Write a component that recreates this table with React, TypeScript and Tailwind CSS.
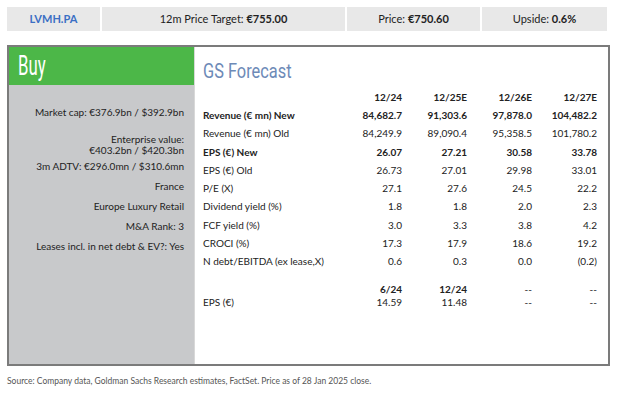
import React from "react";

const rows = [
  { label: "Revenue (€ mn) New", vals: ["84,682.7", "91,303.6", "97,878.0", "104,482.2"], bold: true },
  { label: "Revenue (€ mn) Old", vals: ["84,249.9", "89,090.4", "95,358.5", "101,780.2"] },
  { label: "EPS (€) New", vals: ["26.07", "27.21", "30.58", "33.78"], bold: true },
  { label: "EPS (€) Old", vals: ["26.73", "27.01", "29.98", "33.01"] },
  { label: "P/E (X)", vals: ["27.1", "27.6", "24.5", "22.2"] },
  { label: "Dividend yield (%)", vals: ["1.8", "1.8", "2.0", "2.3"] },
  { label: "FCF yield (%)", vals: ["3.0", "3.3", "3.8", "4.2"] },
  { label: "CROCI (%)", vals: ["17.3", "17.9", "18.6", "19.2"] },
  { label: "N debt/EBITDA (ex lease,X)", vals: ["0.6", "0.3", "0.0", "(0.2)"] },
];

const facts = [
  "Market cap: €376.9bn / $392.9bn",
  "3m ADTV: €296.0mn / $310.6mn",
  "France",
  "Europe Luxury Retail",
  "M&A Rank: 3",
  "Leases incl. in net debt & EV?: Yes",
];

const App = () => {
  return (
    <div className="w-[620px] h-[396px] bg-white text-[#222] font-['Lato','Open_Sans',sans-serif] overflow-hidden">
      {/* top bar */}
      <div className="flex gap-[2px] ml-[7px] mt-[7px] w-[600px] h-[24px] text-[11px]">
        <div className="w-[93px] bg-[#e8e8e8] flex items-center justify-center font-bold text-[#3b6fc4]">
          LVMH.PA
        </div>
        <div className="w-[243px] bg-[#e8e8e8] flex items-center justify-center">
          12m Price Target:&nbsp;<b>€755.00</b>
        </div>
        <div className="w-[133px] bg-[#e8e8e8] flex items-center justify-center">
          Price:&nbsp;<b>€750.60</b>
        </div>
        <div className="w-[125px] bg-[#e8e8e8] flex items-center justify-center">
          Upside:&nbsp;<b>0.6%</b>
        </div>
      </div>

      {/* main box */}
      <div className="ml-[7px] mt-[14px] w-[603px] h-[321px] border-2 border-[#7b7b7b] flex">
        <div className="w-[185px] flex flex-col">
          <div className="h-[38px] bg-[#4cb748] flex items-center pl-[9px] text-white">
            <span className="inline-block origin-left scale-x-[0.62] text-[27px] leading-[30px] font-['Roboto',sans-serif]">
              Buy
            </span>
          </div>
          <div className="flex-1 bg-[#c8c9cb] flex flex-col items-end gap-[8px] pt-[21px] pr-[10px] text-[10px] leading-[12px] text-right">
            <div>{facts[0]}</div>
            <div className="mt-[8px] mb-[-4px] leading-[11px]">
              Enterprise value:
              <br />
              €403.2bn / $420.3bn
            </div>
            {facts.slice(1).map((f) => (
              <div key={f}>{f}</div>
            ))}
          </div>
        </div>

        <div className="flex-1 border-l border-[#d8d8d8] pl-[8px] pt-[12px] text-[10px]">
          <div className="h-[24px]">
            <span className="inline-block origin-left scale-x-[0.78] text-[21px] leading-[24px] text-[#6d8ab7] font-['Roboto',sans-serif]">
              GS Forecast
            </span>
          </div>
          <div className="mt-[5px] grid grid-cols-[134px_65px_65px_65px_65px] auto-rows-[18.3px] items-center">
            <div />
            {["12/24", "12/25E", "12/26E", "12/27E"].map((h) => (
              <div key={h} className="text-right font-bold">
                {h}
              </div>
            ))}
            {rows.map((r) => (
              <React.Fragment key={r.label}>
                <div className={r.bold ? "font-bold" : ""}>{r.label}</div>
                {r.vals.map((v, i) => (
                  <div key={i} className={`text-right ${r.bold ? "font-bold" : ""}`}>
                    {v}
                  </div>
                ))}
              </React.Fragment>
            ))}
          </div>
          <div className="mt-[12px] grid grid-cols-[134px_65px_65px_65px_65px] leading-[13px]">
            <div />
            <div className="text-right font-bold">6/24</div>
            <div className="text-right font-bold">12/24</div>
            <div className="text-right">--</div>
            <div className="text-right">--</div>
            <div>EPS (€)</div>
            <div className="text-right">14.59</div>
            <div className="text-right">11.48</div>
            <div className="text-right">--</div>
            <div className="text-right">--</div>
          </div>
        </div>
      </div>

      <div className="ml-[7px] mt-[9px] text-[8.5px] text-[#555]">
        Source: Company data, Goldman Sachs Research estimates, FactSet. Price as of 28 Jan 2025 close.
      </div>
    </div>
  );
};

export default App;
